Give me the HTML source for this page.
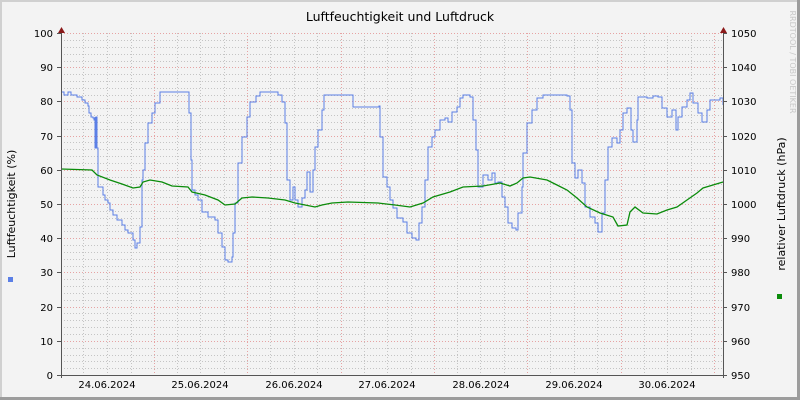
<!DOCTYPE html>
<html><head><meta charset="utf-8"><style>
html,body{margin:0;padding:0;background:#f3f3f3;}
svg{display:block;font-family:"DejaVu Sans","Liberation Sans",sans-serif;}
</style></head><body>
<svg width="800" height="400" viewBox="0 0 800 400" xmlns="http://www.w3.org/2000/svg">
<rect x="0" y="0" width="800" height="400" fill="#f3f3f3"/>
<rect x="0" y="0" width="800" height="2" fill="#d0d0d0"/>
<rect x="0" y="0" width="2" height="400" fill="#d0d0d0"/>
<rect x="0" y="397" width="800" height="3" fill="#9c9c9c"/>
<rect x="797" y="0" width="3" height="400" fill="#9c9c9c"/>
<g id="grid" stroke-width="1" shape-rendering="crispEdges">
<g stroke="#c4c4c4" stroke-dasharray="1,2">
<path d="M61 40.5H723M61 47.5H723M61 54.5H723M61 61.5H723M61 74.5H723M61 81.5H723M61 88.5H723M61 95.5H723M61 108.5H723M61 115.5H723M61 122.5H723M61 129.5H723M61 142.5H723M61 149.5H723M61 156.5H723M61 163.5H723M61 177.5H723M61 184.5H723M61 190.5H723M61 197.5H723M61 211.5H723M61 218.5H723M61 225.5H723M61 231.5H723M61 245.5H723M61 252.5H723M61 259.5H723M61 266.5H723M61 279.5H723M61 286.5H723M61 293.5H723M61 300.5H723M61 313.5H723M61 320.5H723M61 327.5H723M61 334.5H723M61 348.5H723M61 355.5H723M61 361.5H723M61 368.5H723"/>
<path d="M83.5 33V375M107.5 33V375M131.5 33V375M177.5 33V375M200.5 33V375M224.5 33V375M270.5 33V375M294.5 33V375M317.5 33V375M364.5 33V375M387.5 33V375M411.5 33V375M457.5 33V375M480.5 33V375M504.5 33V375M550.5 33V375M574.5 33V375M597.5 33V375M644.5 33V375M667.5 33V375M691.5 33V375"/>
</g>
<g stroke="#e6a3a3" stroke-dasharray="1,2">
<path d="M61 33.5H723M61 67.5H723M61 101.5H723M61 136.5H723M61 170.5H723M61 204.5H723M61 238.5H723M61 272.5H723M61 307.5H723M61 341.5H723"/>
<path d="M154.5 33V375M247.5 33V375M341.5 33V375M434.5 33V375M527.5 33V375M621.5 33V375M714.5 33V375"/>
</g>
</g>
<polyline class="step" fill="none" stroke="#5b7fe6" stroke-width="1" points="61,92 63,92 64,95 67,95 68,92 70,92 71,95 76,95 77,97 81,97 82,100 85,103 88,106 89,113 91,117 93,118 94,120 95,117 95,148 96,117 97,148 98,160 98,187 103,195 105,200 108,203 110,210 113,215 117,220 122,225 125,230 128,233 133,240 135,248 137,243 140,227 142,180 143,170 145,143 148,123 152,113 155,103 160,92 188,92 189,113 191,160 192,190 195,195 198,200 202,212 208,217 215,220 218,233 222,247 225,260 228,262 232,257 233,233 235,203 238,163 242,137 247,117 250,102 256,96 260,92 275,92 278,95 282,102 285,123 287,180 290,200 293,187 295,200 298,207 302,198 305,190 307,172 310,192 313,170 315,147 318,130 322,110 324,95 348,95 353,107 375,107 379,106 380,137 383,177 387,187 390,200 393,208 397,218 403,222 407,233 412,238 416,240 419,223 422,207 425,180 428,147 432,137 435,130 440,120 445,118 448,122 452,112 457,107 460,98 463,95 470,97 473,120 476,150 478,187 483,175 488,180 492,173 495,183 498,182 502,197 505,207 508,223 512,228 516,230 518,213 522,187 523,153 527,123 532,110 537,98 543,95 567,96 570,110 572,163 575,178 578,170 582,183 585,207 590,217 595,223 598,232 602,213 605,180 608,147 612,138 617,143 620,130 623,113 627,108 631,130 633,142 637,120 638,97 647,98 653,96 658,97 662,108 667,117 672,110 676,130 678,117 682,107 687,100 690,93 693,103 698,113 702,122 707,110 710,100 720,98 723,105"/>
<polyline fill="none" stroke="#0b8c0b" stroke-width="1.3" points="61,169 92,170 97,175 110,180 122,184 133,188 140,187 143,182 150,180 162,182 172,186 188,187 192,192 205,195 218,200 225,205 235,204 242,198 252,197 268,198 285,200 295,203 315,207 322,205 332,203 348,202 378,203 395,205 410,207 423,203 433,197 450,192 463,187 483,186 500,183 510,186 517,183 523,178 530,177 547,180 557,185 567,190 577,198 587,207 600,213 613,217 618,226 627,225 630,212 635,207 643,213 657,214 667,210 677,207 687,200 697,193 703,188 713,185 723,182"/>
<g stroke="#555" shape-rendering="crispEdges">
<path d="M61.5 30V378M57 375.5H723M723.5 30V378"/>
<path d="M57 33.5H61M57 67.5H61M57 101.5H61M57 136.5H61M57 170.5H61M57 204.5H61M57 238.5H61M57 272.5H61M57 307.5H61M57 341.5H61M723 33.5H727M723 67.5H727M723 101.5H727M723 136.5H727M723 170.5H727M723 204.5H727M723 238.5H727M723 272.5H727M723 307.5H727M723 341.5H727M723 375.5H727"/>
</g>
<path d="M58 33L61.5 27L65 33Z" fill="#8b1a1a"/>
<path d="M720 33L723.5 27L727 33Z" fill="#8b1a1a"/>
<g font-size="10" fill="#000" text-anchor="end">
<text x="53" y="37">100</text><text x="53" y="71">90</text><text x="53" y="105">80</text><text x="53" y="140">70</text><text x="53" y="174">60</text><text x="53" y="208">50</text><text x="53" y="242">40</text><text x="53" y="276">30</text><text x="53" y="311">20</text><text x="53" y="345">10</text><text x="53" y="379">0</text>
</g>
<g font-size="10" fill="#000">
<text x="731" y="37">1050</text><text x="731" y="71">1040</text><text x="731" y="105">1030</text><text x="731" y="140">1020</text><text x="731" y="174">1010</text><text x="731" y="208">1000</text><text x="731" y="242">990</text><text x="731" y="276">980</text><text x="731" y="311">970</text><text x="731" y="345">960</text><text x="731" y="379">950</text>
</g>
<g font-size="10" fill="#000" text-anchor="middle">
<text x="107" y="388">24.06.2024</text><text x="200" y="388">25.06.2024</text><text x="294" y="388">26.06.2024</text><text x="387" y="388">27.06.2024</text><text x="481" y="388">28.06.2024</text><text x="574" y="388">29.06.2024</text><text x="667" y="388">30.06.2024</text>
</g>
<text x="400" y="21" font-size="12.5" text-anchor="middle" fill="#000">Luftfeuchtigkeit und Luftdruck</text>
<text transform="translate(15,204) rotate(-90)" font-size="11" text-anchor="middle" fill="#000">Luftfeuchtigkeit (%)</text>
<text transform="translate(785,204) rotate(-90)" font-size="11" text-anchor="middle" fill="#000">relativer Luftdruck (hPa)</text>
<text transform="translate(790,62) rotate(90)" font-size="8" text-anchor="middle" fill="#c8c8c8">RRDTOOL / TOBI OETIKER</text>
<rect x="8" y="277" width="5" height="5" fill="#5b7fe6"/>
<rect x="777" y="294" width="5" height="5" fill="#0b8c0b"/>
</svg>
<script>
document.querySelectorAll('polyline.step').forEach(function(p){
  var pts=p.getAttribute('points').trim().split(/\s+/).map(function(s){return s.split(',').map(Number);});
  var out=[pts[0].join(',')];
  for(var i=1;i<pts.length;i++){
    out.push(pts[i][0]+','+pts[i-1][1]);
    out.push(pts[i][0]+','+pts[i][1]);
  }
  p.setAttribute('points',out.join(' '));
});
</script>
</body></html>
